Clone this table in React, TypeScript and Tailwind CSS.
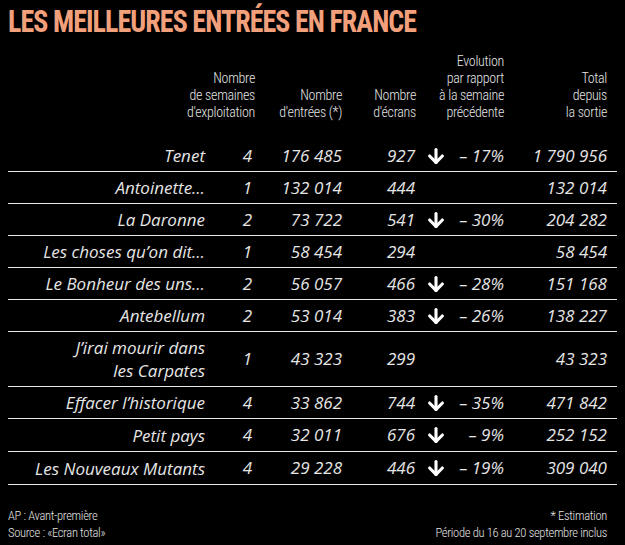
import { ArrowDown } from "lucide-react"
import React from "react"

type Row = {
  title: string[]
  weeks: string
  entries: string
  screens: string
  evo?: string
  total: string
}

const rows: Row[] = [
  { title: ["Tenet"], weeks: "4", entries: "176 485", screens: "927", evo: "– 17%", total: "1 790 956" },
  { title: ["Antoinette…"], weeks: "1", entries: "132 014", screens: "444", total: "132 014" },
  { title: ["La Daronne"], weeks: "2", entries: "73 722", screens: "541", evo: "– 30%", total: "204 282" },
  { title: ["Les choses qu’on dit…"], weeks: "1", entries: "58 454", screens: "294", total: "58 454" },
  { title: ["Le Bonheur des uns…"], weeks: "2", entries: "56 057", screens: "466", evo: "– 28%", total: "151 168" },
  { title: ["Antebellum"], weeks: "2", entries: "53 014", screens: "383", evo: "– 26%", total: "138 227" },
  { title: ["J’irai mourir dans", "les Carpates"], weeks: "1", entries: "43 323", screens: "299", total: "43 323" },
  { title: ["Effacer l’historique"], weeks: "4", entries: "33 862", screens: "744", evo: "– 35%", total: "471 842" },
  { title: ["Petit pays"], weeks: "4", entries: "32 011", screens: "676", evo: "– 9%", total: "252 152" },
  { title: ["Les Nouveaux Mutants"], weeks: "4", entries: "29 228", screens: "446", evo: "– 19%", total: "309 040" },
]

const cols = "grid grid-cols-[197px_50px_87px_74px_88px_103px]"
const condensed = "font-['Roboto_Condensed','Liberation_Sans_Narrow','DejaVu_Sans_Condensed',sans-serif]"

const HeadCell = ({ lines }: { lines: string[] }) => (
  <div className="flex flex-col items-end">
    {lines.map((l) => (
      <span key={l} className="whitespace-nowrap">
        {l}
      </span>
    ))}
  </div>
)

const App = () => {
  return (
    <div className="w-[625px] h-[545px] bg-black text-[#e6e6e6] px-[8px] overflow-hidden">
      <h1
        className={`${condensed} font-bold text-[31px] leading-[34px] pt-[5px] text-[#f2a07c] tracking-[-1px] whitespace-nowrap scale-x-[0.9] origin-left`}
      >
        LES MEILLEURES ENTRÉES EN FRANCE
      </h1>

      <header
        className={`${cols} items-end mt-[14px] ${condensed} font-light text-[14px] leading-[17px] text-[#e4e4e4] tracking-[-0.3px]`}
      >
        <div />
        <HeadCell lines={["Nombre", "de semaines", "d'exploitation"]} />
        <HeadCell lines={["Nombre", "d'entrées (*)"]} />
        <HeadCell lines={["Nombre", "d'écrans"]} />
        <HeadCell lines={["Evolution", "par rapport", "à la semaine", "précédente"]} />
        <HeadCell lines={["Total", "depuis", "la sortie"]} />
      </header>

      <main className="mt-[19px] font-['Open_Sans',sans-serif] italic text-[17px] font-normal">
        {rows.map((row, i) => (
          <div
            key={row.title[0]}
            className={`${cols} items-center border-b border-[#e8e8e8] ${
              row.title.length > 1 ? "h-[55px]" : i > 7 ? "h-[33px]" : "h-[32px]"
            }`}
          >
            <div className="text-right leading-[23px] whitespace-nowrap">
              {row.title.map((t) => (
                <div key={t}>{t}</div>
              ))}
            </div>
            <div className="text-right pr-[3px]">{row.weeks}</div>
            <div className="text-right">{row.entries}</div>
            <div className="text-right pr-[1px]">{row.screens}</div>
            <div className="flex items-center justify-between pl-[9px]">
              {row.evo ? (
                <>
                  <ArrowDown size={22} strokeWidth={3.4} className="text-white" />
                  <span>{row.evo}</span>
                </>
              ) : null}
            </div>
            <div className="text-right">{row.total}</div>
          </div>
        ))}
      </main>

      <footer
        className={`flex justify-between w-[599px] mt-[22px] ${condensed} font-light text-[12.5px] leading-[17px] tracking-[-0.3px] text-[#e4e4e4]`}
      >
        <div>
          AP : Avant-première
          <br />
          Source : «Ecran total»
        </div>
        <div className="text-right">
          * Estimation
          <br />
          Période du 16 au 20 septembre inclus
        </div>
      </footer>
    </div>
  )
}

export default App
